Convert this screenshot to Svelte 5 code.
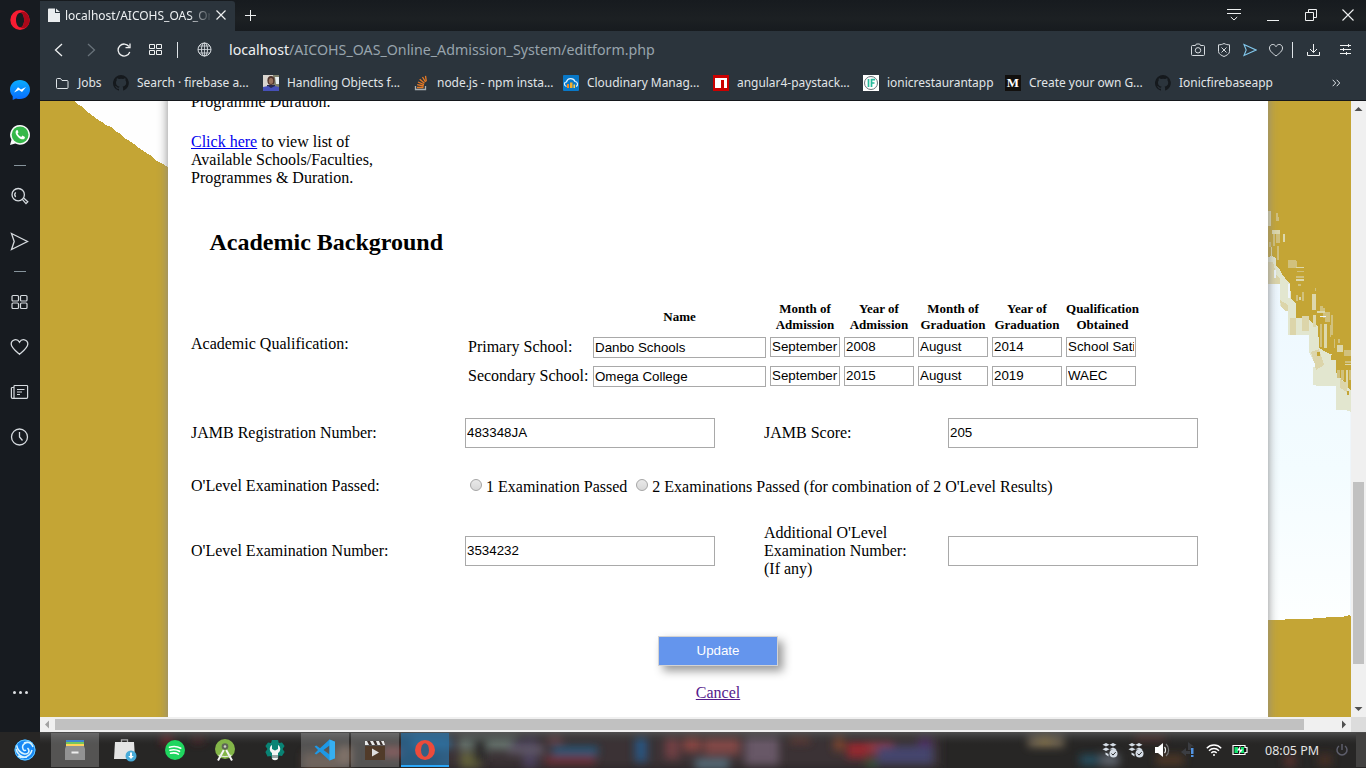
<script>
  const bookmarks = [
    { icon: 'folder', label: 'Jobs', w: 58 },
    { icon: 'github', label: 'Search · firebase a...', w: 150 },
    { icon: 'photo', label: 'Handling Objects f...', w: 150 },
    { icon: 'stack', label: 'node.js - npm insta...', w: 150 },
    { icon: 'cloud', label: 'Cloudinary Manag...', w: 150 },
    { icon: 'npm', label: 'angular4-paystack...', w: 150 },
    { icon: 'if', label: 'ionicrestaurantapp', w: 142 },
    { icon: 'medium', label: 'Create your own G...', w: 150 },
    { icon: 'github', label: 'Ionicfirebaseapp', w: 150 }
  ];
  const heads = [['Month of', 'Admission'], ['Year of', 'Admission'], ['Month of', 'Graduation'], ['Year of', 'Graduation'], ['Qualification', 'Obtained']];
  const schools = [
    { label: 'Primary School:', name: 'Danbo Schools', cells: ['September', '2008', 'August', '2014', 'School Satisfactory'] },
    { label: 'Secondary School:', name: 'Omega College', cells: ['September', '2015', 'August', '2019', 'WAEC'] }
  ];
  const blobs = [
    [488, 740, 60, 20, '#6c7c74'], [470, 760, 20, 16, '#6b6a3c'], [530, 750, 14, 36, '#4e4364'], [480, 750, 14, 24, '#2b2b2b'],
    [525, 744, 26, 14, '#48405a'], [555, 738, 14, 10, '#7a4a50'], [526, 750, 36, 8, '#686072'], [575, 751, 46, 10, '#245c80'],
    [570, 760, 50, 8, '#7c2930'], [641, 748, 12, 28, '#255c8e'], [672, 746, 14, 26, '#7b4347'], [692, 742, 18, 20, '#934a45'],
    [722, 744, 36, 22, '#8b4b49'], [712, 764, 34, 10, '#5d7a8a'], [762, 748, 34, 34, '#705f70'], [800, 738, 20, 10, '#6a3c35'],
    [839, 741, 10, 20, '#884a2d'], [857, 750, 20, 16, '#a5282f'], [880, 748, 26, 14, '#9c3741'], [905, 755, 56, 18, '#474a78'],
    [925, 740, 14, 14, '#4f2f66'], [872, 764, 10, 6, '#376a3d'], [1046, 738, 36, 18, '#84765d'], [1045, 738, 12, 14, '#a08a58'],
    [1090, 760, 20, 10, '#28566c'], [1110, 760, 18, 12, '#68707a'], [1170, 760, 28, 10, '#573a25'], [1150, 736, 30, 8, '#65302f'],
    [1290, 761, 12, 12, '#5b332f'], [1325, 760, 14, 12, '#4e3028'], [167, 738, 10, 14, '#84242a'], [198, 738, 12, 10, '#54282b'],
    [320, 762, 34, 18, '#5c4538'], [345, 756, 14, 20, '#7c6050'], [393, 752, 20, 10, '#8a3a3c'], [432, 740, 40, 18, '#387299']
  ];
  const patches = [
    [1268, 211, 3, 15], [1276, 213, 2, 8], [1277, 217, 2, 4], [1272, 230, 8, 4], [1273, 234, 2, 12], [1276, 234, 4, 9], [1283, 234, 2, 8],
    [1269, 242, 2, 5], [1277, 246, 2, 14], [1271, 247, 1, 10], [1288, 260, 8, 8], [1296, 261, 1, 6], [1296, 267, 8, 1], [1297, 271, 7, 1],
    [1296, 276, 8, 2], [1296, 279, 8, 2], [1298, 284, 3, 2], [1296, 295, 2, 6], [1299, 297, 2, 3], [1302, 292, 2, 9], [1315, 288, 1, 3],
    [1312, 294, 4, 16], [1320, 306, 3, 7], [1323, 308, 2, 10], [1317, 311, 8, 2], [1325, 312, 5, 10], [1331, 315, 2, 20], [1313, 315, 3, 12],
    [1330, 325, 1, 12], [1320, 324, 2, 23], [1324, 324, 3, 24], [1334, 339, 1, 9], [1338, 339, 2, 4], [1337, 345, 6, 7], [1344, 350, 7, 6],
    [1345, 361, 6, 2], [1345, 364, 6, 1], [1337, 370, 3, 8], [1341, 370, 3, 10], [1346, 370, 2, 18], [1349, 370, 2, 10]
  ];
</script>

{#snippet icon(name)}
  {#if name === 'folder'}
    <svg width="15" height="16" viewBox="0 0 15 16" fill="none" stroke="#dfe4e8"><path d="M1.500 4.500a1 1 0 0 1 1-1h3l1.500 2h5a1 1 0 0 1 1 1v6a1 1 0 0 1-1 1h-9.500a1 1 0 0 1-1-1z" /></svg>
  {:else if name === 'github'}
    <svg width="16" height="16" viewBox="0 0 16 16"><path fill="#15191d" fill-rule="evenodd" d="M8 0a8 8 0 0 0-2.500 15.600c.4.100.5-.2.500-.4v-1.500c-2.200.5-2.700-1-2.700-1-.4-.9-.9-1.200-.9-1.200-.7-.5.1-.5.100-.5.8.100 1.200.8 1.200.8.7 1.300 1.900.9 2.400.7.100-.5.3-.9.500-1.100-1.800-.2-3.600-.9-3.600-4 0-.9.300-1.600.8-2.100-.1-.2-.4-1 .1-2.100 0 0 .7-.2 2.200.8a7.500 7.500 0 0 1 4 0c1.500-1 2.200-.8 2.200-.8.400 1.100.2 1.900.1 2.100.5.500.8 1.200.8 2.100 0 3.100-1.900 3.800-3.700 4 .3.300.600.8.600 1.500v2.200c0 .2.100.5.500.4A8 8 0 0 0 8 0z" /></svg>
  {:else if name === 'photo'}
    <svg width="16" height="16" viewBox="0 0 16 16"><rect width="16" height="16" fill="#d9d5cf" /><path fill="#7f806c" d="M10 0h6v12h-6z" /><path fill="#e8eef0" d="M12 2h4v7h-3z" /><ellipse cx="8" cy="5.500" rx="3.600" ry="4.500" fill="#50352d" /><ellipse cx="8" cy="6" rx="2.200" ry="3" fill="#98715c" /><path fill="#27284d" d="M4 10h8v3H4z" /><path fill="#4650b8" d="M0 12l5-1 3 2 4-2 4 1v4H0z" /></svg>
  {:else if name === 'stack'}
    <svg width="16" height="16" viewBox="0 0 16 16" fill="none"><path stroke="#aab0b3" stroke-width="1.300" d="M2.500 11v3.500h10V11" /><path stroke="#e77a25" stroke-width="1.300" d="M4 12.500h6.500M4.200 9.700l6.500 1.300M5 7l6 2.700M6.700 4.300l4.800 4M9.500 2l3 5M12.500.8l.8 5.500" /></svg>
  {:else if name === 'cloud'}
    <svg width="16" height="16" viewBox="0 0 16 16"><rect width="16" height="16" rx="1" fill="#0878c8" /><path fill="none" stroke="#e5f4ff" stroke-width="1.200" d="M3.500 11.500C.5 10.500 1 7 3.500 7 4.500 2.500 10.500 2.500 12 6.500c3 .3 3.300 4 1 5" /><path fill="#f38b1e" d="M4 9h2v4H4z" /><path fill="#f5ae2c" d="M7 7.500h2.500V13H7z" /><path fill="#ffd04a" d="M10.500 9.500H12V13h-1.500z" /></svg>
  {:else if name === 'npm'}
    <svg width="16" height="16" viewBox="0 0 16 16"><path fill="#cb0000" d="M0 0h16v16H0z" /><path fill="#fff" d="M2 3h12v10h-3V5H8v8H2z" /></svg>
  {:else if name === 'if'}
    <svg width="16" height="16" viewBox="0 0 16 16"><path fill="#fff" d="M0 0h16v16H0z" /><circle cx="8" cy="8" r="6.500" fill="none" stroke="#657277" /><path fill="none" stroke="#25b99a" stroke-width="1.700" d="M5.500 4v8M8.500 12V4.700H12M8 8h3.500" /></svg>
  {:else if name === 'medium'}
    <span class="medium">M</span>
  {/if}
{/snippet}

<div class="screen">
  <div class="main">
    <nav class="side">
      <div class="opera"><svg width="20" height="20" viewBox="0 0 20 20"><path fill="#f71c32" fill-rule="evenodd" d="M10 0a9.700 10 0 1 0 0 20A9.700 10 0 0 0 10 0zm.3 2.700c2.300 0 3.800 3.200 3.800 7.300s-1.500 7.300-3.800 7.300S6 14.100 6 10s2-7.300 4.300-7.300z" /><path fill="#a90819" d="M10.300 2.700C13 0 19.300 3 19.500 10s-6.500 10-9.200 7.300c2.300 0 3.800-3.200 3.800-7.300s-1.500-7.300-3.800-7.300z" /></svg></div>
      <div><svg width="20" height="20" viewBox="0 0 20 20"><defs><linearGradient id="msg" x2="0" y2="1"><stop stop-color="#09adff" /><stop offset="1" stop-color="#096bff" /></linearGradient></defs><path fill="url(#msg)" d="M10 0C4.300 0 0 4.200 0 9.500c0 2.800 1.100 5.100 2.700 6.700V20l3.300-1.600c1.200.4 2.600.6 4 .6 5.700 0 10-4.200 10-9.500S15.700 0 10 0z" /><path fill="#fff" d="M4 12.400l4-5.200 3 2.300 5-2.400-4 5-3-2.200z" /></svg></div>
      <div><svg width="20" height="20" viewBox="0 0 20 20"><path fill="#fafafa" d="M10 0a9.800 9.800 0 0 0-8.500 14.800L0 20l5.300-1.400A9.900 9.900 0 1 0 10 0z" /><circle cx="10.100" cy="9.800" r="8.400" fill="#36b84a" /><path fill="#fff" d="M6.800 4.900c-3 2 .1 7.100 4 9 2.800 1.100 4.200-.3 4.100-2l-2.500-1.300-1.100 1.300c-2-.7-3-2-3.700-3.400l.9-1.200-1-2.400z" /></svg></div>
      <div class="dash"></div>
      <div><svg width="20" height="20" viewBox="0 0 20 20" fill="none" stroke="#d5dade" stroke-width="1.300"><circle cx="8.200" cy="8.700" r="6.200" /><path d="M5.700 11a3.500 3.500 0 0 1 0-4.600M12.300 13.400l3.700 4.200 1.800-1.800-4.100-3.800" /></svg></div>
      <div><svg width="20" height="20" viewBox="0 0 20 20" fill="none" stroke="#d5dade" stroke-width="1.300"><path d="M1.500 2.500l16 8-16 8 2.700-8z" /></svg></div>
      <div class="dash"></div>
      <div><svg width="20" height="20" viewBox="0 0 20 20" fill="none" stroke="#d5dade" stroke-width="1.200"><rect x="2" y="3.500" width="6.500" height="5.500" rx="1" /><rect x="10.500" y="3.500" width="6.500" height="5.500" rx="1" /><rect x="2" y="11" width="6.500" height="5.500" rx="1" /><rect x="10.500" y="11" width="6.500" height="5.500" rx="1" /></svg></div>
      <div><svg width="20" height="20" viewBox="0 0 20 20" fill="none" stroke="#d5dade" stroke-width="1.300"><path d="M9.500 17.300C4.500 13 1.200 10.500 1.200 7c0-4.500 6-6 8.300-1.800C11.800 1 17.800 2.500 17.800 7c0 3.500-3.300 6-8.300 10.300z" /></svg></div>
      <div><svg width="20" height="20" viewBox="0 0 20 20" fill="none" stroke="#d5dade" stroke-width="1.200"><path d="M4 6v10.500M4 5.500H2.200a.8.800 0 0 0-.8.800v9a1 1 0 0 0 1 1h14.200a1 1 0 0 0 1-1v-11a.8.800 0 0 0-.8-.8H4.800a.8.800 0 0 0-.8.800zM7 7.500h7.500M7 10h5M7 12.500h3" /></svg></div>
      <div><svg width="20" height="20" viewBox="0 0 20 20" fill="none" stroke="#d5dade" stroke-width="1.300"><circle cx="9.500" cy="10" r="8" /><path d="M9.500 5v5l3 3.500" /></svg></div>
      <div class="more"><i></i><i></i><i></i></div>
    </nav>

    <div class="browser">
      <div class="tabs">
        <div class="tab">
          <svg width="12" height="15" viewBox="0 0 12 15" fill="#e9ecee"><path d="M0 1.500A.9.900 0 0 1 .9.600H7V5h5v9H0z" /><path d="M8 .6L12 4H8z" /></svg>
          <span class="title">localhost/AICOHS_OAS_On</span>
          <svg width="10" height="10" viewBox="0 0 10 10" stroke="#eef0f1" stroke-width="1.200"><path d="M.5.5l9 9M9.500.5l-9 9" /></svg>
        </div>
        <svg class="plus" width="12" height="12" viewBox="0 0 12 12" stroke="#eef0f1"><path d="M5.500 0v11M0 5.500h11" /></svg>
        <div class="wincontrols">
          <svg width="14" height="14" viewBox="0 0 14 14" fill="none" stroke="#eef0f1"><path d="M0 1.500h14M0 5.500h14M3.800 9l3.200 3 3.200-3" /></svg>
          <svg width="12" height="14" viewBox="0 0 12 14" stroke="#eef0f1"><path d="M0 12.500h12" /></svg>
          <svg width="12" height="12" viewBox="0 0 12 12" fill="none" stroke="#eef0f1"><path d="M.5 3.500h8v8h-8zM3.500 3.500v-3h8v8h-3" /></svg>
          <svg width="12" height="12" viewBox="0 0 12 12" stroke="#eef0f1" stroke-width="1.100"><path d="M.5.500l11 11M11.500.500l-11 11" /></svg>
        </div>
      </div>

      <div class="address">
        <svg width="10" height="14" viewBox="0 0 10 14" fill="none" stroke="#eef0f1" stroke-width="1.300"><path d="M8 1L1.500 7 8 13" /></svg>
        <svg width="10" height="14" viewBox="0 0 10 14" fill="none" stroke="#68727a" stroke-width="1.300"><path d="M2 1l6.500 6L2 13" /></svg>
        <svg width="14" height="14" viewBox="0 0 14 14" fill="none" stroke="#eef0f1" stroke-width="1.300"><path d="M12.800 9A6 6 0 1 1 12 3.500M13 .5v4.200H8.500" /></svg>
        <svg width="14" height="12" viewBox="0 0 14 12" fill="none" stroke="#eef0f1"><path d="M.5.5h5v4h-5zM7.500.5h5v4h-5zM.5 6.500h5v4h-5zM7.500 6.500h5v4h-5z" /></svg>
        <i class="sep"></i>
        <svg width="15" height="15" viewBox="0 0 15 15" fill="none" stroke="#d6dbdf"><circle cx="7.500" cy="7.500" r="6.500" /><ellipse cx="7.500" cy="7.500" rx="3" ry="6.500" /><path d="M1 7.500h13M2 4h11M2 11h11M7.500 1v13" stroke-width=".8" /></svg>
        <span class="url"><b>localhost</b>/AICOHS_OAS_Online_Admission_System/editform.php</span>
        <div class="tools">
          <svg width="14" height="14" viewBox="0 0 14 14" fill="none" stroke="#d6dbdf"><path d="M1.500 2.500h3l.8-1.500h3.400l.8 1.500h3a1 1 0 0 1 1 1v8a1 1 0 0 1-1 1h-11a1 1 0 0 1-1-1v-8a1 1 0 0 1 1-1z" /><circle cx="7" cy="7.300" r="2.700" /></svg>
          <svg width="14" height="14" viewBox="0 0 14 14" fill="none" stroke="#d6dbdf"><path d="M7 .5c2 1 3.500 1.300 5.500 1.300v6.700c0 2.500-3 4-5.500 5-2.500-1-5.500-2.500-5.500-5V1.800C3.500 1.800 5 1.500 7 .5zM4.500 4.500l5 5M9.500 4.500l-5 5" /></svg>
          <svg width="14" height="14" viewBox="0 0 14 14" fill="none" stroke="#82c8ed" stroke-width="1.100"><path d="M1 1.500L13 7 1 12.500 3.200 7z" /></svg>
          <svg width="14" height="14" viewBox="0 0 14 14" fill="none" stroke="#d6dbdf"><path d="M7 13C3 9.800.5 8 .5 5c0-3.800 4.800-5 6.500-1.300C8.700 0 13.500 1.200 13.500 5c0 3-2.500 4.800-6.500 8z" /></svg>
          <i class="sep"></i>
          <svg width="14" height="14" viewBox="0 0 14 14" fill="none" stroke="#eef0f1"><path d="M.5 9v3.500h12V9M6.500 1v8.500M3 6l3.500 3.500L10 6" /></svg>
          <svg width="12" height="12" viewBox="0 0 12 12" stroke="#eef0f1"><path d="M0 1.500h11M0 5.500h11M0 9.500h11M8.500 0v3M3.500 4v3M6.500 8v3" /></svg>
        </div>
      </div>

      <div class="bookmarks">
        {#each bookmarks as b}
          <div class="bm" style:width="{b.w}px">{@render icon(b.icon)}<span class="name">{b.label}</span></div>
        {/each}
        <svg class="chev" width="9" height="8" viewBox="0 0 9 8" fill="none" stroke="#dfe4e8"><path d="M.7.800L3.700 4l-3 3.200M4.700.800L7.700 4l-3 3.200" /></svg>
      </div>

      <div class="view">
        <div class="page">
          <svg class="backdrop" width="1311" height="616" viewBox="40 101 1311 616" shape-rendering="crispEdges">
            <defs><linearGradient id="sky" x1="0" y1="0" x2="0" y2="1"><stop stop-color="#eef8ff" /><stop offset=".55" stop-color="#f3fcff" /><stop offset="1" stop-color="#fdffff" /></linearGradient></defs>
            <path fill="#c4a535" d="M40 101h1311v616H40z" />
            <path fill="#fefefe" d="M72 101h3l2 3 4 2 3 3 5 4 4 3 4 3 5 3 4 3 5 2 3 3 5 3 4 4 5 3 6 4 5 4 6 4 5 3 4 4 5 3 4 2 6 4v30h40v-100z" />
            <path fill="#e2e6cf" d="M1268 257l4-1 4 2v8l4 4 2 4 3 4 5 6 1 14 5 6v14l10-2 4 5 4 3 4 2 1 22 9 5 8 3v16l8 10 7 9v21h-83z" />
            <path fill="#dcd5aa" d="M1268 262h5l3 12 4 5v6h-12zM1280 300l8 5v13h-5zM1290 318h6v17h-6zM1302 316h7v15h-7zM1311 352l8-3 5 16-8 5zM1340 379l8 5-1 8-7-4z" />
            <path fill="url(#sky)" d="M1268 284h12v21l5 6h3v24h21v17l6 12v3h-2v18h3v1h20v24h10l5 2v203l-7 1v1h-18v1h-13v1h-28v1h-17z" />
            {#each patches as [x, y, w, h], i}
              <rect {x} {y} width={w} height={h} fill={i % 3 === 0 ? '#ddd8ac' : '#d1c17d'} />
            {/each}
            <path fill="#c4a535" d="M1297 312h5v6h-6zM1317 352h3v4h-3zM1331 355h5v5h-5zM1347 391h2v4h-2z" />
            <path fill="#eef5fa" d="M1288 284h2v14h-2zM1320 316h6v1h-6zM1274 270h2v8h-2zM1350 412h1v204h-1z" />
          </svg>
          <main>
            <p class="intro cut">Programme Duration.</p>
            <p class="intro"><a href="#list">Click here</a> to view list of<br />Available Schools/Faculties,<br />Programmes &amp; Duration.</p>
            <h2>Academic Background</h2>
            <div class="row quals">
              <span>Academic Qualification:</span>
              <div class="schools">
                <span></span>
                <strong>Name</strong>
                {#each heads as h}<strong>{h[0]}<br />{h[1]}</strong>{/each}
                {#each schools as s}
                  <label for={s.name}>{s.label}</label>
                  <input id={s.name} class="wide" value={s.name} />
                  {#each s.cells as c}<input value={c} />{/each}
                {/each}
              </div>
            </div>
            <div class="row jamb">
              <span>JAMB Registration Number:</span><input value="483348JA" />
              <span>JAMB Score:</span><input value="205" />
            </div>
            <div class="row passed">
              <span>O'Level Examination Passed:</span>
              <div class="radios"><input id="one" type="radio" name="exam" /><label for="one">1 Examination Passed</label><input id="two" type="radio" name="exam" /><label for="two">2 Examinations Passed (for combination of 2 O'Level Results)</label></div>
            </div>
            <div class="row number">
              <span>O'Level Examination Number:</span><input value="3534232" />
              <span>Additional O'Level<br />Examination Number:<br />(If any)</span><input value="" />
            </div>
            <div class="actions">
              <button>Update</button>
              <a href="#cancel">Cancel</a>
            </div>
          </main>
        </div>
        <div class="vscroll">
          <svg width="15" height="15" viewBox="0 0 15 15"><path fill="#505050" d="M3.500 10h8l-4-4z" /></svg>
          <div class="vthumb"></div>
          <svg width="15" height="15" viewBox="0 0 15 15"><path fill="#505050" d="M3.500 5h8l-4 4z" /></svg>
        </div>
        <div class="hscroll">
          <svg width="15" height="15" viewBox="0 0 15 15"><path fill="#a3a3a3" d="M9 3.500v8l-4-4z" /></svg>
          <div class="hthumb"></div>
          <svg width="15" height="15" viewBox="0 0 15 15"><path fill="#505050" d="M6 3.500v8l4-4z" /></svg>
        </div>
        <div class="corner"></div>
      </div>
    </div>
  </div>

  <footer>
    <svg class="wall" width="1366" height="36" viewBox="0 732 1366 36">
      <defs>
        <filter id="soft" x="-50%" y="-50%" width="200%" height="200%"><feGaussianBlur stdDeviation="4.500" /></filter>
        <linearGradient id="shade" x2="0" y2="1"><stop stop-color="#555" stop-opacity=".85" /><stop offset=".35" stop-color="#333" stop-opacity="0" /></linearGradient>
      </defs>
      <path fill="#272625" d="M0 732h1366v36H0z" />
      <path fill="#3b3335" d="M440 732h500v36H440z" filter="url(#soft)" />
      <g filter="url(#soft)" opacity=".85">{#each blobs as [x, y, w, h, c]}<rect x={x - w / 2} y={y - h / 2} width={w} height={h} fill={c} />{/each}</g>
      <path fill="url(#shade)" d="M40 732h1326v36H40z" />
    </svg>
    <div class="apps">
      <div><svg width="22" height="22" viewBox="0 0 22 22"><circle cx="11" cy="11" r="10.500" fill="#1688f5" /><path fill="none" stroke="#d9f5ff" stroke-width="1.500" d="M2.500 6c1 5 4 8 8 9 4 .5 6-3 3-6M18 4c-5-2-11 1-9 6 .5 1.500 2 2 3 1M4 17c5 3 12 1 14-6M10 4c4-2 8 0 9 4M2 10c1 5 6 9 11 8" /><circle cx="11" cy="11" r="10" fill="none" stroke="#65c9ff" /></svg></div>
      <div class="open"><svg width="22" height="22" viewBox="0 0 22 22"><path fill="#3f85ce" d="M2 1h18v4H2z" /><path fill="#75c65b" d="M2 3h18v4H2z" /><path fill="#ffd35b" d="M2 5h18v4H2z" /><path fill="#929292" d="M2 7h18l1 3v11H1V10z" /><path fill="#eee" d="M7.500 12.500h7v2h-7z" /></svg></div>
      <div><svg width="24" height="24" viewBox="0 0 24 24"><path fill="none" stroke="#acacac" stroke-width="1.300" d="M8.500 4V1.800h6V4" /><path fill="#e4e4e4" d="M2 4h19l1 17H1z" /><circle cx="18" cy="18" r="5.500" fill="#48abd9" /><path fill="#fff" d="M17 14.500h2V18h1.800L18 21l-2.800-3H17z" /></svg></div>
      <div><svg width="20" height="20" viewBox="0 0 20 20"><circle cx="10" cy="10" r="10" fill="#1fd65f" /><path fill="none" stroke="#fff" stroke-width="1.600" stroke-linecap="round" d="M4.500 7.200c4-1.200 8-.8 11.300 1M5 10.300c3.500-1 6.700-.6 9.500 1M5.600 13.300c3-.8 5.500-.5 7.800.8" /></svg></div>
      <div><svg width="22" height="22" viewBox="0 0 22 22"><circle cx="11" cy="10" r="10" fill="#83b548" /><circle cx="11" cy="7.500" r="3.300" fill="#5e6656" /><circle cx="11" cy="7.500" r="1.300" fill="#ccd2c6" /><path fill="none" stroke="#f4f4f4" stroke-width="2" d="M9.800 11L4 21.500M12.200 11L18 21.500" /><path fill="none" stroke="#e4eadc" stroke-width="1.200" d="M4.500 16c4 2 9 2 13 0" /></svg></div>
      <div><svg width="22" height="22" viewBox="0 0 22 22"><path fill="#098374" d="M8 1h6l.8 3L18 3.500 20.600 7l-2 3 2 3-2.600 4-3.300-.5L14 20H8l-1-3-3.500.5L1.400 13l2-3-2-3L4 3.500l3 .5z" /><path fill="#f5f5f5" d="M8 6v4l3 1.500L14 10V6c3 2 3 6 0 8v5c0 3-6 3-6 0v-5C5 12 5 8 8 6z" /><path fill="#98a3a3" d="M8 16h6v3H8z" /></svg></div>
      <div class="open"><svg width="22" height="22" viewBox="0 0 22 22"><path fill="#1d98e6" d="M15.500.5L6 9.300 2.200 6.500.6 7.400 4 11 .6 14.600l1.600.9L6 12.700l9.500 8.800 5.500-2.300V2.800zM15.500 6.500v9L9.500 11z" fill-rule="evenodd" /><path fill="#36aff2" d="M15.500.5L21 2.800v16.400l-5.500 2.300z" /></svg></div>
      <div class="open"><svg width="22" height="22" viewBox="0 0 22 22"><path fill="#513b29" d="M1 7h20v14H1z" /><path fill="#3b302c" d="M1 2h20v4H1z" /><path fill="#e8e8e8" d="M1 2h2l2 4H1zM6 2h3l2 4H8zM12 2h3l1.500 4h-3zM17 2h3l1 4h-2z" /><path fill="#dedede" d="M8 9.500l7 4-7 4z" /></svg></div>
      <div class="open active"><svg width="22" height="22" viewBox="0 0 22 22"><ellipse cx="11" cy="11" rx="10" ry="10" fill="#ec4b3b" /><ellipse cx="11" cy="11" rx="4" ry="6.700" fill="#356083" /></svg></div>
    </div>
    <div class="tray">
      {#each [0, 1] as n}
        <svg width="16" height="16" viewBox="0 0 16 16" fill="#d5dde6"><path d="M4 1l3.500 1.800L4 4.600.5 2.800zM11 1l3.500 1.800L11 4.600 7.500 2.800zM4 5.500l3.500 1.800L4 9.100.5 7.300zM11 5.500l3.500 1.800-1.500.9-5.500-.9zM3.500 10.500l3 1.500v2.500l-3-2z" /><circle cx="11.500" cy="11.500" r="4" /><path d="M9.500 11.500l1.500 1.600 2.700-3" fill="none" stroke="#292a2c" /></svg>
      {/each}
      <svg width="16" height="16" viewBox="0 0 16 16"><path fill="#fff" d="M1 5h3l5-4v14l-5-4H1z" /><path fill="none" stroke="#eee" stroke-width="1.200" d="M10.500 5c1.400 1.500 1.400 4.500 0 6" /><path fill="none" stroke="#777" stroke-width="1.200" d="M12 2c3.500 3 3.500 9 0 12" /></svg>
      <svg width="16" height="16" viewBox="0 0 16 16"><path fill="#3b3d42" d="M8 4V0l6 4.500h-3V8H8zM1 10l5-4v3h4v3H6v2z" /><path fill="#5294e2" d="M11 6h2.500v6H11zM11 13h2.500v2H11z" /></svg>
      <svg width="16" height="16" viewBox="0 0 16 16" fill="none" stroke="#fff" stroke-width="1.400"><path d="M.8 6.200c4-4.200 10.400-4.200 14.400 0M3 8.700c2.800-3 7.200-3 10 0M5.300 11c1.500-1.600 3.900-1.600 5.400 0" /><circle cx="8" cy="13" r="1" fill="#fff" stroke="none" /></svg>
      <svg width="16" height="16" viewBox="0 0 16 16"><path fill="#111" stroke="#fff" stroke-width="1.200" d="M1 3.500h12v2h2v5h-2v2H1z" /><path fill="#12e36c" d="M2.500 5h3.500v6H2.500zM9 5h3v6H9z" /><path fill="#fff" d="M8.500 3.500L5 8.500h2.500L6.500 13 11 7.500H8z" /></svg>
      <span class="clock">08:05 PM</span>
      <svg class="power" width="14" height="14" viewBox="0 0 14 14" fill="none" stroke="#5d5e6b" stroke-width="1.500"><path d="M7 1v6M4 3a5 5 0 1 0 6 0" /></svg>
      <i class="strip"></i>
    </div>
  </footer>
</div>

<style>
  :global(body) { margin: 0; overflow: hidden; }
  svg { display: block; flex: none; }
  .screen { width: 1366px; height: 768px; display: flex; flex-direction: column; overflow: hidden; font-family: "Noto Sans", sans-serif; }
  .main { display: flex; height: 732px; }
  .side { width: 40px; height: 732px; background: #171b20; display: flex; flex-direction: column; box-sizing: border-box; }
  .side > div { height: 45px; display: flex; align-items: center; justify-content: center; flex: none; }
  .side > .opera { height: 40px; margin-bottom: 27px; }
  .side > .dash { height: 16px; }
  .dash::before { content: ""; width: 12px; height: 1px; background: #87949c; }
  .side > .more { margin-top: auto; height: 80px; gap: 3px; }
  .more i { width: 3px; height: 3px; border-radius: 50%; background: #dde0e3; }
  .browser { flex: 1; display: flex; flex-direction: column; }
  .tabs { height: 31px; background: linear-gradient(#171b1f, #1c2023 60%, #171b1f); display: flex; align-items: center; }
  .tab { width: 195px; height: 30px; margin-top: 1px; box-sizing: border-box; padding: 0 9px 2px 8px; background: #2b343c; border-radius: 0 3px 0 0; display: flex; align-items: center; }
  .title { width: 146px; margin-left: 5px; margin-right: 6px; overflow: hidden; white-space: nowrap; font-size: 12px; color: #edf0f2; mask-image: linear-gradient(90deg, #000 124px, transparent 148px); }
  .plus { margin-left: 10px; }
  .wincontrols { margin-left: auto; margin-right: 12px; padding-bottom: 2px; display: flex; align-items: center; gap: 26px; }
  .wincontrols svg:last-child { margin-left: -1px; }
  .address { height: 37px; box-sizing: border-box; background: #2b343c; display: flex; align-items: center; padding: 0 0 0 14px; }
  .address > svg:nth-child(2) { margin-left: 22px; }
  .address > svg:nth-child(3) { margin-left: 21px; }
  .address > svg:nth-child(4) { margin-left: 18px; }
  .sep { width: 1px; height: 16px; background: #dfe4e8; }
  .address > .sep { margin: 0 19px 0 14px; }
  .url { margin-left: 17px; margin-top: -1px; font-size: 14.220px; color: #98a4ad; white-space: nowrap; }
  .url b { font-weight: 400; color: #eef0f2; }
  .tools { margin-left: auto; margin-right: 14px; display: flex; align-items: center; gap: 12px; }
  .tools .sep { margin-left: -3px; margin-right: 2px; }
  .tools svg:last-child { margin-left: 7px; }
  .bookmarks { height: 32px; box-sizing: border-box; background: #2b343c; display: flex; align-items: center; padding: 0 25px 2px 15px; }
  .bm { display: flex; align-items: center; gap: 8px; font-size: 11.950px; color: #e1e5e8; white-space: nowrap; flex: none; }
  .name { margin-top: -1px; padding-bottom: 1px; }
  .chev { margin-left: auto; }
  .medium { width: 16px; height: 16px; background: #12100e; color: #fff; font: bold 13px/16px "Liberation Serif", serif; text-align: center; }
  .view { height: 632px; box-sizing: border-box; border-top: 1px solid #14171b; display: grid; grid-template: 616px 15px / 1311px 15px; }
  .page { position: relative; overflow: hidden; height: 616px; font: 16px/18px "Liberation Serif", serif; color: #000; }
  .backdrop { position: absolute; inset: 0; }
  main { position: relative; margin: -9px 0 0 128px; width: 1100px; height: 660px; box-sizing: border-box; padding: 1px 0 0 23px; background: #fff; box-shadow: 0 0 10px #888; }
  p, h2 { margin: 0; }
  .cut { margin-bottom: 22px; }
  h2 { font-size: 24px; line-height: 28px; margin: 41px 0 45px 18.500px; }
  .row { display: grid; grid-template-columns: 274px 299px 184px 250px; align-items: center; }
  input { box-sizing: border-box; border: 1px solid #a9a9a9; border-radius: 0; background: #fff; padding: 0 1px 2px; margin: 0; font: 13.333px "Liberation Sans", sans-serif; color: #000; outline: 0; height: 30px; width: 250px; }
  .quals { height: 86px; margin-bottom: 31px; align-items: start; grid-template-columns: 277px 1fr; }
  .quals > span { margin-top: 34px; }
  .schools { display: grid; grid-template-columns: 121px 173px repeat(4, 70px) 73px; grid-template-rows: 32px 25px 25px; gap: 4px; align-items: start; }
  .schools strong { font-size: 13px; line-height: 16px; text-align: center; align-self: center; white-space: nowrap; justify-self: center; }
  .schools label { margin-top: 1px; white-space: nowrap; }
  .schools input { width: 70px; height: 20px; padding: 0 1px 1px; }
  .schools input.wide { width: 173px; height: 21px; padding: 1px; }
  .jamb { height: 30px; }
  .passed { height: 18px; margin-top: 29px; grid-template-columns: 274px 1fr; }
  .passed > span { margin-top: -2px; }
  .radios { display: flex; align-items: center; padding: 1px 0 0 5px; }
  .radios input { appearance: none; width: 12px; height: 12px; border-radius: 50%; border: 1px solid #a5a5a5; background: linear-gradient(#e9e9e9, #d8d8d8); margin: -4px 4px 0 0; padding: 0; }
  .radios label + input { margin-left: 9px; }
  .number { height: 54px; margin-top: 29px; }
  .actions { width: 1054px; display: flex; flex-direction: column; align-items: center; margin-top: 58px; gap: 18px; }
  button { width: 120px; height: 30px; background: #6495ed; border: 1px solid #d3d3d3; color: #fff; font: 13.333px "Liberation Sans", sans-serif; box-shadow: 5px 5px 10px #999; padding: 0 0 2px; }
  a { color: #0000ee; }
  .actions a { color: #551a8b; }
  .vscroll { background: #f0f0f0; display: flex; flex-direction: column; align-items: center; }
  .vthumb { width: 11px; height: 182px; flex: none; background: #c1c1c1; margin-top: 366px; }
  .hscroll { background: #f0f0f0; display: flex; align-items: center; justify-content: space-between; }
  .hthumb { width: 1249px; height: 11px; background: #c1c1c1; margin-right: auto; }
  .corner { background: #dcdcdc; }
  .vscroll svg:last-child { margin-top: auto; }
  footer { position: relative; height: 36px; display: flex; justify-content: space-between; }
  .wall { position: absolute; inset: 0; }
  .apps { position: relative; display: flex; gap: 2px; padding: 1px 0 1px 1px; }
  .apps > div { width: 48px; height: 34px; box-sizing: border-box; display: flex; align-items: center; justify-content: center; }
  .apps .open { background: rgba(160, 160, 160, .38); }
  .apps .active { background: rgba(45, 112, 162, .72); border-bottom: 2px solid #2ca7f8; padding-top: 2px; }
  .tray { position: relative; display: flex; align-items: center; gap: 10px; }
  .clock { font-size: 12.500px; color: #e4e4e4; margin-left: 7px; width: 54px; white-space: nowrap; }
  .power { margin-left: 6px; }
  .strip { width: 10px; height: 34px; margin-left: -3px; background: #434241; }
</style>
